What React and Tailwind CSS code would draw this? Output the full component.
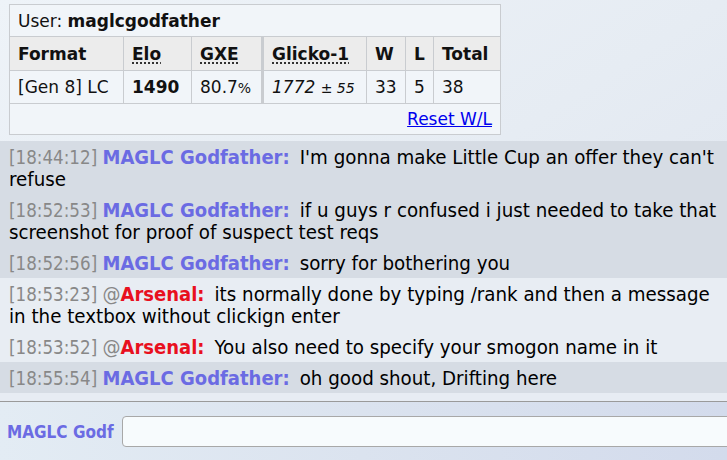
import React from "react";

const msgs = [
  { time: "18:44:12", name: "MAGLC Godfather", rank: "", color: "text-[#6b6be3]", text: "I'm gonna make Little Cup an offer they can't refuse", dark: true },
  { time: "18:52:53", name: "MAGLC Godfather", rank: "", color: "text-[#6b6be3]", text: "if u guys r confused i just needed to take that screenshot for proof of suspect test reqs", dark: true },
  { time: "18:52:56", name: "MAGLC Godfather", rank: "", color: "text-[#6b6be3]", text: "sorry for bothering you", dark: true },
  { time: "18:53:23", name: "Arsenal", rank: "@", color: "text-[#e8101e]", text: "its normally done by typing /rank and then a message in the textbox without clickign enter", dark: false },
  { time: "18:53:52", name: "Arsenal", rank: "@", color: "text-[#e8101e]", text: "You also need to specify your smogon name in it", dark: false },
  { time: "18:55:54", name: "MAGLC Godfather", rank: "", color: "text-[#6b6be3]", text: "oh good shout, Drifting here", dark: true },
];

const cell = "border border-[#c9ccd0] px-[8px] text-left";

export default function App() {
  return (
    <div className="h-[460px] w-[727px] overflow-hidden flex flex-col bg-gradient-to-br from-[#eef3f8] via-[#e6ecf3] to-[#dde3ee]">
      <div className="pt-[4px] pl-[9px]">
        <table
          className="border-collapse bg-[#f1f5f9] text-[17px] text-[#111] leading-[20px]"
          style={{ fontFamily: '"DejaVu Sans", Verdana, sans-serif' }}
        >
          <tbody>
            <tr className="h-[32px]">
              <td colSpan={7} className={cell}>
                User: <strong>maglcgodfather</strong>
              </td>
            </tr>
            <tr className="h-[34px] bg-[#ececec] font-bold">
              <th className={`${cell} w-[114px]`}>Format</th>
              <th className={`${cell} w-[68px]`}>
                <span className="underline decoration-dotted underline-offset-[3px]">Elo</span>
              </th>
              <th className={`${cell} w-[71px]`}>
                <span className="underline decoration-dotted underline-offset-[3px]">GXE</span>
              </th>
              <th className={`${cell} w-[104px] border-l-[3px]`}>
                <span className="underline decoration-dotted underline-offset-[3px]">Glicko-1</span>
              </th>
              <th className={`${cell} w-[39px]`}>W</th>
              <th className={`${cell} w-[28px]`}>L</th>
              <th className={`${cell} w-[67px]`}>Total</th>
            </tr>
            <tr className="h-[33px] font-normal">
              <td className={`${cell} whitespace-nowrap`}>[Gen 8] LC</td>
              <td className={cell}>
                <strong>1490</strong>
              </td>
              <td className={cell}>
                80.7<span className="text-[14px]">%</span>
              </td>
              <td className={`${cell} border-l-[3px] whitespace-nowrap`}>
                <em>1772</em> <span className="text-[14px]">± <em>55</em></span>
              </td>
              <td className={cell}>33</td>
              <td className={cell}>5</td>
              <td className={cell}>38</td>
            </tr>
            <tr className="h-[31px]">
              <td colSpan={7} className={`${cell} text-right`}>
                <a href="#" className="text-[#0000ee] underline">
                  Reset W/L
                </a>
              </td>
            </tr>
          </tbody>
        </table>
      </div>

      <div
        className="mt-[6px] text-[20.3px] leading-[22px] text-black"
        style={{ fontFamily: '"DejaVu Sans Condensed", "DejaVu Sans", sans-serif', fontStretch: "condensed" }}
      >
        {msgs.map((m, i) => (
          <div
            key={i}
            className={`pl-[9px] pr-[6px] pt-[5px] pb-[4px] ${m.dark ? "bg-[#d6dce4]" : "bg-[#e8edf3]"}`}
          >
            <span className="text-[18.6px] leading-none text-[#888]">[{m.time}] </span>
            <strong className={`text-[20px] leading-none ${m.color}`}>
              {m.rank && <span className="font-normal text-[#888]">{m.rank}</span>}
              {m.name}:
            </strong>
            <span className="ml-[10px]">{m.text}</span>
          </div>
        ))}
      </div>

      <div className="h-[8px] bg-[#e7ecf3]"></div>

      <div className="flex-1 border-t border-[#9a9a9a] bg-gradient-to-r from-[#e3ecf4] via-[#dbe3ef] to-[#d3dbec] flex items-start pt-[14px] overflow-hidden">
        <div
          className="pl-[7px] pr-[8px] pt-[4px] text-[17px] font-bold text-[#6b6be3] whitespace-nowrap"
          style={{ fontFamily: '"DejaVu Sans Condensed", "DejaVu Sans", sans-serif', fontStretch: "condensed" }}
        >
          MAGLC Godf
        </div>
        <input
          type="text"
          className="shrink-0 w-[640px] h-[31px] rounded-[4px] border border-[#a8a8a8] bg-[#f7fbfd] outline-none"
        />
      </div>
    </div>
  );
}
